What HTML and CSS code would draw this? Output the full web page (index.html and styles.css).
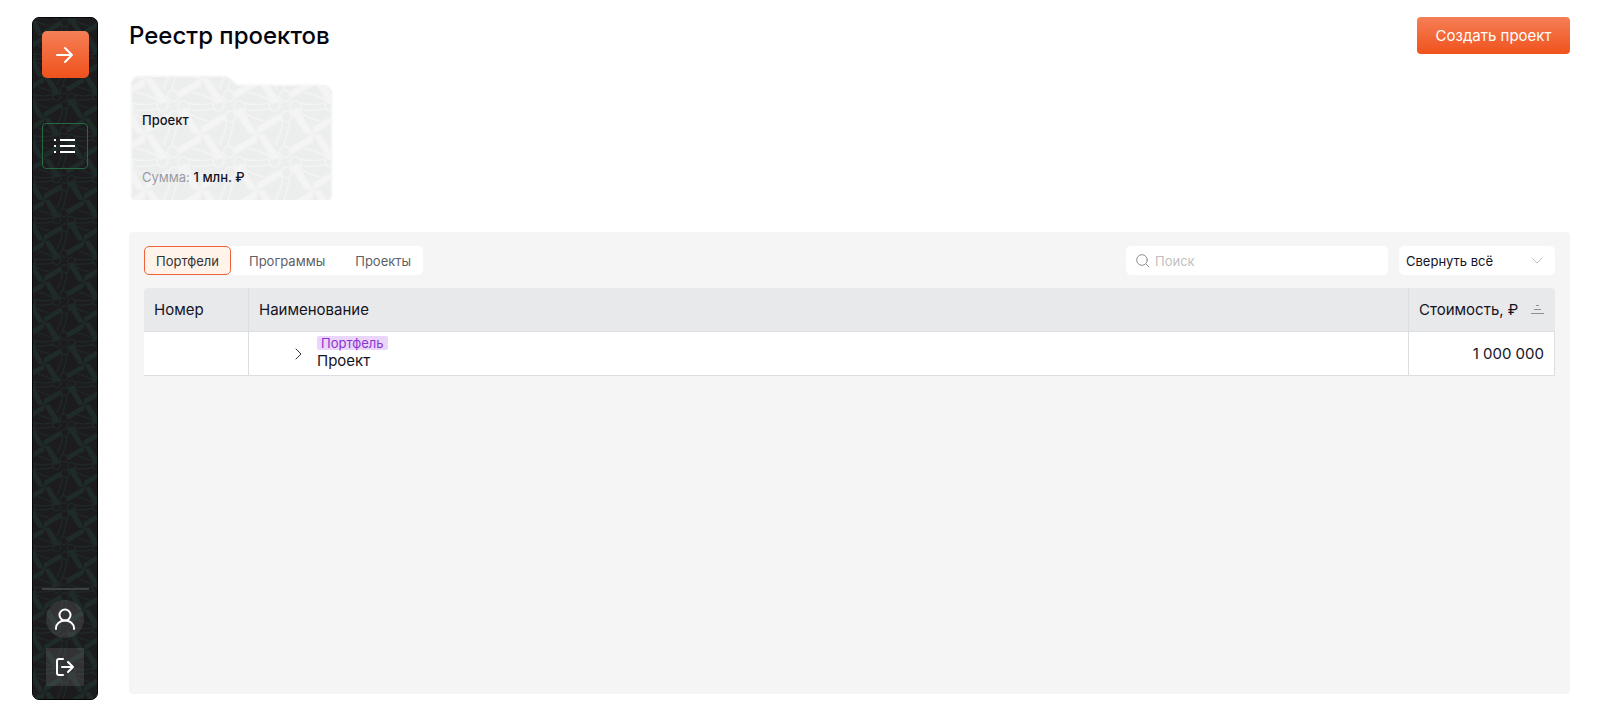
FILE: index.html
```html
<!DOCTYPE html>
<html lang="ru">
<head>
  <meta charset="UTF-8" />
  <meta name="viewport" content="width=device-width, initial-scale=1.0" />
  <title>Реестр проектов</title>
  <link rel="stylesheet" href="styles.css">
</head>
<body>
  <div class="app">
    <aside class="sidebar">
      <svg class="sidebar-bg" width="100%" height="100%" aria-hidden="true">
        <defs>
          <g id="ornament">
            <g class="orn-fill">
              <path d="M60 62V46L107 18L114 30Z" />
              <path d="M60 62H76L110 113L93 119Z" />
              <path d="M60 62V78L14 106L6 94Z" />
              <path d="M60 62H44L11 10L27 4Z" />
            </g>
            <g class="orn-line">
              <circle cx="22" cy="1" r="12" />
              <circle cx="22" cy="124" r="12" />
              <circle cx="98" cy="-1" r="12" />
              <circle cx="98" cy="122" r="12" />
              <circle cx="3" cy="23" r="12" />
              <circle cx="123" cy="23" r="12" />
              <circle cx="0" cy="101" r="12" />
              <circle cx="120" cy="101" r="12" />
              <path d="M31 9Q48 12 88 5M32 -6Q60 0 86 -6M31 132Q48 135 88 128M32 117Q60 123 86 117" />
              <path d="M-6 32Q-3 50 -20 84M10 33Q6 60 -4 89M114 32Q117 50 100 84M130 33Q126 60 116 89" />
              <path d="M30 12Q48 28 74 32M44 94Q60 96 90 112" />
            </g>
          </g>
          <pattern id="pattern-dark" width="120" height="123" patternUnits="userSpaceOnUse" patternTransform="translate(-9 -3) scale(0.3333)">
            <use href="#ornament" />
          </pattern>
          <pattern id="pattern-light" width="120" height="123" patternUnits="userSpaceOnUse" patternTransform="translate(-12 31) scale(0.4667 0.4553)">
            <use href="#ornament" />
          </pattern>
        </defs>
        <rect width="100%" height="100%" fill="url(#pattern-dark)" />
      </svg>

      <button class="side-btn" aria-label="Развернуть меню">
        <svg width="20" height="20" viewBox="0 0 20 20"><path d="M2 10h15M10 3l7 7-7 7" /></svg>
      </button>
      <nav class="side-nav">
        <a class="side-link" href="#" aria-label="Реестр">
          <svg width="22" height="16" viewBox="0 0 22 16"><path d="M6 2h15M6 8h15M6 14h15" /><path d="M0 2h2M0 8h2M0 14h2" /></svg>
        </a>
      </nav>
      <div class="side-bottom">
        <button class="side-small side-user" aria-label="Профиль">
          <svg width="22" height="22" viewBox="0 0 22 22"><circle cx="11" cy="7" r="5.5" /><path d="M2 21v-1a9 7.500 0 0 1 18 0v1" /></svg>
        </button>
        <button class="side-small" aria-label="Выйти">
          <svg width="20" height="18" viewBox="0 0 20 18"><path d="M8 1H4a2 2 0 0 0-2 2v12a2 2 0 0 0 2 2h4M7 9h11M13 4l5 5-5 5" /></svg>
        </button>
      </div>
    </aside>

    <main class="main">
      <header class="header">
        <h1>Реестр проектов</h1>
        <button class="btn-create">Создать проект</button>
      </header>

      <a class="folder" href="#">
        <svg class="folder-bg" viewBox="0 0 204 126" aria-hidden="true">
          <path class="folder-base" d="M3 121V10Q3 2 11 2H93Q98 2 102 5L106 9Q108 11 112 11H192Q202 11 202 19V118Q202 122 200 125H5Q3 123 3 121Z" />
          <path fill="url(#pattern-light)" d="M3 121V10Q3 2 11 2H93Q98 2 102 5L106 9Q108 11 112 11H192Q202 11 202 19V118Q202 122 200 125H5Q3 123 3 121Z" />
          <path class="folder-edge" d="M4 125Q2 122 2 119V10Q2 1 11 1H93Q98 1 102 4L107 8Q109 10 112 10H192Q203 10 203 19V119Q203 122 201 125" />
        </svg>
        <span class="folder-name">Проект</span>
        <span class="folder-sum">Сумма: <b>1 млн. ₽</b></span>
      </a>

      <section class="panel">
        <div class="toolbar">
          <div class="tabs">
            <button class="tab active">Портфели</button>
            <button class="tab">Программы</button>
            <button class="tab">Проекты</button>
          </div>
          <label class="search">
            <svg width="14" height="14" viewBox="0 0 14 14"><circle cx="6" cy="6" r="5.300" /><path d="M10 10l3 3" /></svg>
            <input type="text" placeholder="Поиск" aria-label="Поиск">
          </label>
          <div class="select">
            <select aria-label="Группировка">
              <option>Свернуть всё</option>
            </select>
            <svg width="12" height="8" viewBox="0 0 12 8"><path d="M1 1l5 5 5-5" /></svg>
          </div>
        </div>

        <table class="table">
          <thead>
            <tr>
              <th class="col-num">Номер</th>
              <th>Наименование</th>
              <th class="col-cost">
                <div class="sort">
                  Стоимость, ₽
                  <svg width="13" height="11" viewBox="0 0 13 11"><path d="M5 1.500h3M3 5.500h7M0 9.500h13" /></svg>
                </div>
              </th>
            </tr>
          </thead>
          <tbody>
            <tr>
              <td></td>
              <td>
                <div class="item">
                  <button class="expand" aria-label="Развернуть">
                    <svg width="8" height="12" viewBox="0 0 8 12"><path d="M1 1l5 5-5 5" /></svg>
                  </button>
                  <div class="item-text">
                    <span class="tag">Портфель</span>
                    <span>Проект</span>
                  </div>
                </div>
              </td>
              <td class="cost">1 000 000</td>
            </tr>
          </tbody>
        </table>
      </section>
    </main>
  </div>
</body>
</html>
```

FILE: styles.css
```css
* { box-sizing: border-box; }
body {
  margin: 0;
  background: #fff;
  color: #14141f;
  font-family: Inter, "Liberation Sans", sans-serif;
  font-size: 15px;
  font-optical-sizing: none;
}
button, input, select {
  font-family: inherit;
  color: inherit;
  border: none;
  padding: 0;
}
button { cursor: pointer; }
svg {
  display: block;
  fill: none;
  stroke-linecap: round;
  stroke-linejoin: round;
}
.app {
  display: flex;
  gap: 31px;
  min-height: 100vh;
  padding: 17px 30px 20px 32px;
}

/* sidebar */
.sidebar {
  position: relative;
  flex: none;
  width: 66px;
  padding: 13px 8px;
  display: flex;
  flex-direction: column;
  align-items: center;
  background: #1c1c1f;
  border: 1px solid #050505;
  border-radius: 7px;
  overflow: hidden;
}
.sidebar > * { position: relative; }
.sidebar .sidebar-bg {
  position: absolute;
  inset: 0;
}
.orn-fill {
  fill: currentColor;
  stroke: none;
}
.orn-line {
  stroke: currentColor;
  stroke-width: 3;
}
#pattern-dark { color: #1f2b29; }
#pattern-light { color: #f4f4f4; }
.sidebar button svg, .side-link svg {
  stroke: #fff;
  stroke-width: 2;
}
.side-btn, .side-link, .side-small {
  display: flex;
  align-items: center;
  justify-content: center;
}
.side-btn {
  width: 47px;
  height: 47px;
  border-radius: 5px;
  background: linear-gradient(#f57f56, #f0521c);
}
.side-nav {
  flex: 1;
  margin-top: 45px;
}
.side-link {
  width: 46px;
  height: 46px;
  border: 1px solid #24693f;
  border-radius: 4px;
}
.side-link svg { stroke-linecap: butt; }
.side-bottom {
  display: flex;
  flex-direction: column;
  align-items: center;
  gap: 10px;
  width: 47px;
  padding-top: 10px;
  border-top: 2px solid #3d4145;
}
.side-small {
  width: 38px;
  height: 38px;
  background: rgba(255, 255, 255, 0.1);
}
.side-user { border-radius: 50%; }

/* content */
.main {
  flex: 1;
  min-width: 0;
  display: flex;
  flex-direction: column;
  padding-bottom: 6px;
}
.header {
  display: flex;
  align-items: center;
  justify-content: space-between;
}
h1 {
  margin: 0;
  font-size: 24px;
  font-weight: 500;
  color: #05050f;
}
.btn-create {
  height: 37px;
  width: 153px;
  border-radius: 4px;
  background: linear-gradient(#f57f56, #f0521c);
  color: #fff;
  font-size: 15px;
}
.folder {
  position: relative;
  width: 204px;
  height: 126px;
  margin-top: 21px;
  padding: 36px 13px 15px;
  display: flex;
  flex-direction: column;
  justify-content: space-between;
  color: inherit;
  font-size: 13px;
  line-height: 18px;
  text-decoration: none;
}
.folder-bg {
  position: absolute;
  inset: 0;
}
.folder-base { fill: #eceeee; }
.folder-edge { stroke: #f1f1f1; }
.folder-name, .folder-sum { position: relative; }
.folder-name, .folder-sum b { font-weight: 500; }
.folder-sum { color: #9a9aa2; }
.folder-sum b { color: #14141f; }

.panel {
  flex: 1;
  margin-top: 31px;
  padding: 14px 15px;
  background: #f5f5f5;
  border-radius: 4px;
}
.toolbar {
  display: flex;
  gap: 11px;
  height: 29px;
  margin-bottom: 13px;
  font-size: 13px;
}
.tabs {
  display: flex;
  margin-right: auto;
  background: #fff;
  border-radius: 5px;
}
.tab {
  padding: 0 11px;
  border: 1px solid transparent;
  border-radius: 5px;
  background: none;
  color: #5f5f66;
  font-size: 13px;
}
.tab + .tab { padding-left: 17px; }
.tab.active {
  border-color: #f0623c;
  background: #fff3ea;
  color: #333;
}
.search {
  display: flex;
  align-items: center;
  gap: 5px;
  width: 262px;
  padding: 0 10px;
  background: #fff;
  border-radius: 5px;
}
.search svg { stroke: #8e8e96; }
.search input {
  flex: 1;
  min-width: 0;
  background: none;
  font-size: 13px;
  outline: none;
}
.search input::placeholder { color: #bfbfbf; }
.select {
  position: relative;
  width: 156px;
}
.select select {
  width: 100%;
  height: 100%;
  padding: 0 28px 0 7px;
  appearance: none;
  background: #fff;
  border-radius: 5px;
  font-size: 13px;
}
.select svg {
  position: absolute;
  top: 11px;
  right: 12px;
  stroke: #bfbfbf;
  pointer-events: none;
}

.table {
  width: 100%;
  table-layout: fixed;
  border-collapse: separate;
  border-spacing: 0;
}
.table th, .table td {
  height: 44px;
  padding: 0 10px;
  border-right: 1px solid #dddee1;
  border-bottom: 1px solid #dddee1;
}
.table th {
  background: #e8e9eb;
  font-weight: 400;
  text-align: left;
}
.table th:first-child { border-top-left-radius: 4px; }
.table th:last-child {
  border-top-right-radius: 4px;
  border-right-color: #e8e9eb;
}
.table td { background: #fff; }
.table .col-num { width: 105px; }
.table .col-cost { width: 146px; }
.sort {
  display: flex;
  align-items: center;
  justify-content: space-between;
}
.sort svg {
  stroke: #8e8e96;
  stroke-linecap: butt;
}
.item {
  display: flex;
  align-items: center;
  gap: 14px;
  padding-left: 36px;
}
.expand {
  display: flex;
  background: none;
}
.expand svg { stroke: #333; }
.item-text {
  display: flex;
  flex-direction: column;
  align-items: flex-start;
  gap: 1px;
  line-height: 20px;
}
.tag {
  padding: 0 4px;
  border-radius: 2px;
  background: #ead6fb;
  color: #8a35cf;
  font-size: 13px;
  line-height: 14px;
}
.table .cost { text-align: right; }
```
